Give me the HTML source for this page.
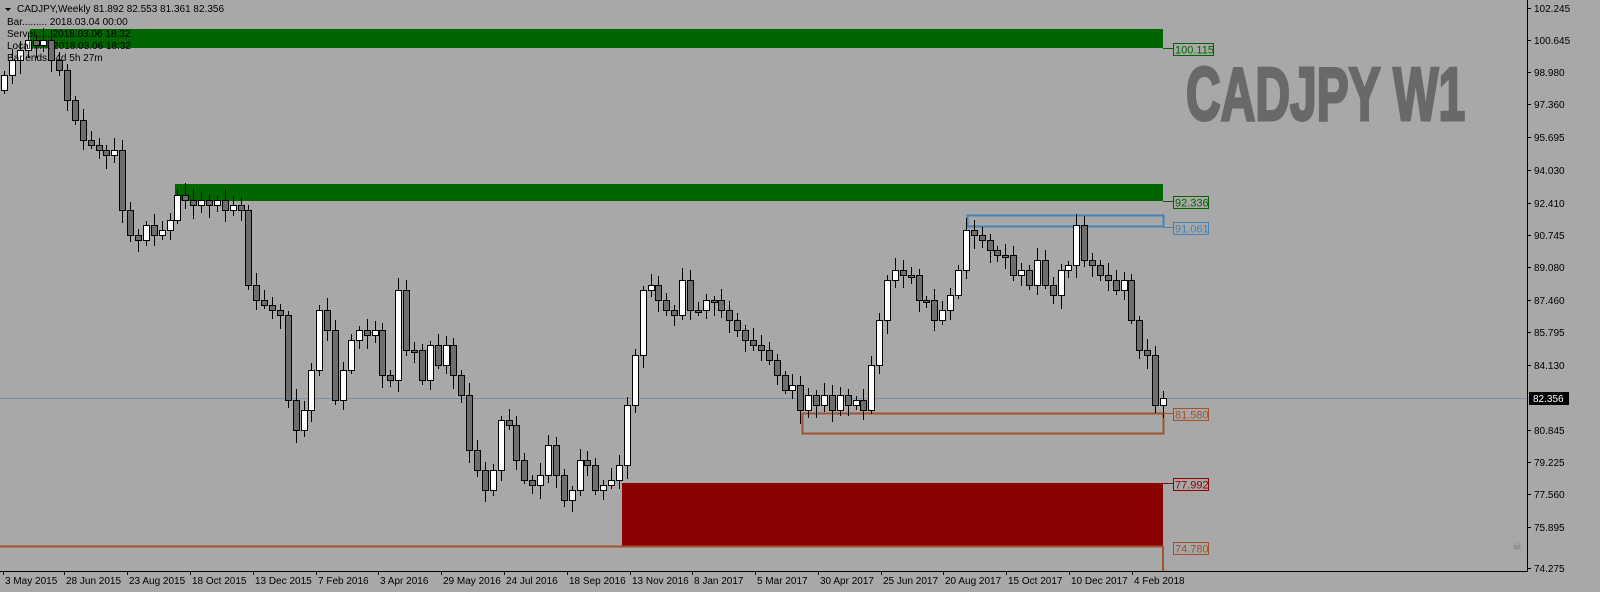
<!DOCTYPE html>
<html><head><meta charset="utf-8"><style>
html,body{margin:0;padding:0;background:#a8a8a8;width:1600px;height:592px;overflow:hidden;font-family:"Liberation Sans",sans-serif}
#c{position:absolute;left:0;top:0}
</style></head><body>
<svg id="c" width="1600" height="592" xmlns="http://www.w3.org/2000/svg">
<rect x="0" y="0" width="1600" height="592" fill="#a8a8a8"/>
<g id="zones">
<rect x="30" y="29" width="1133" height="19" fill="#006400"/>
<rect x="175" y="184" width="988" height="17" fill="#006400"/>
<rect x="622" y="483" width="541" height="63" fill="#8b0000"/>
<rect x="967.5" y="215.5" width="196" height="11" fill="none" stroke="#4682b4" stroke-width="2"/>
<rect x="802.5" y="413.5" width="361" height="20" fill="none" stroke="#a0522d" stroke-width="2"/>
<line x1="0" y1="546.5" x2="1163" y2="546.5" stroke="#a0522d" stroke-width="2"/>
<line x1="1163" y1="546" x2="1163" y2="571" stroke="#a0522d" stroke-width="2"/>
<line x1="0" y1="398.5" x2="1527" y2="398.5" stroke="#7890a8" stroke-width="1"/>
</g>
<g id="candles"></g>
<g font-family="Liberation Sans,sans-serif" font-size="11">
<line x1="1163" y1="48.5" x2="1173" y2="48.5" stroke="#006400"/><rect x="1173.5" y="43.5" width="40" height="12" fill="none" stroke="#006400"/><text x="1175" y="53.5" fill="#006400">100.115</text>
<line x1="1163" y1="201.5" x2="1173" y2="201.5" stroke="#006400"/><rect x="1173.5" y="196.5" width="35" height="12" fill="none" stroke="#006400"/><text x="1175" y="206.5" fill="#006400">92.336</text>
<line x1="1163" y1="227.5" x2="1173" y2="227.5" stroke="#4682b4"/><rect x="1173.5" y="222.5" width="35" height="12" fill="none" stroke="#4682b4"/><text x="1175" y="232.5" fill="#4682b4">91.061</text>
<line x1="1163" y1="413.5" x2="1173" y2="413.5" stroke="#a0522d"/><rect x="1173.5" y="408.5" width="35" height="12" fill="none" stroke="#a0522d"/><text x="1175" y="418.5" fill="#a0522d">81.580</text>
<line x1="1163" y1="483.5" x2="1173" y2="483.5" stroke="#8b0000"/><rect x="1173.5" y="478.5" width="35" height="12" fill="none" stroke="#8b0000"/><text x="1175" y="488.5" fill="#8b0000">77.992</text>
<rect x="1173.5" y="542.5" width="35" height="12" fill="none" stroke="#a0522d"/><text x="1175" y="552.5" fill="#a0522d">74.780</text>
</g>
<text x="1186" y="120" font-family="Liberation Sans,sans-serif" font-weight="bold" font-size="75" fill="#696969" stroke="#696969" stroke-width="3" transform="translate(1186 0) scale(0.64 1) translate(-1186 0)">CADJPY W1</text>
<g font-size="10" font-family="Liberation Sans,sans-serif" fill="#000">
<path d="M5 8 L11 8 L8 11 Z" fill="#000"/>
<text x="17" y="12">CADJPY,Weekly  81.892 82.553 81.361 82.356</text>
<text x="7" y="25">Bar......... 2018.03.04 00:00</text>
<text x="7" y="37">Server..... 2018.03.06 18:32</text>
<text x="7" y="49">Local....... 2018.03.06 18:32</text>
<text x="7" y="61">Bar ends.. 4d 5h 27m</text>
</g>
<line x1="1527.5" y1="0" x2="1527.5" y2="572" stroke="#000"/>
<line x1="0" y1="571.5" x2="1528" y2="571.5" stroke="#000"/>
<g id="axis" font-size="10" font-family="Liberation Sans,sans-serif"></g>
<rect x="1529" y="392" width="40" height="13" fill="#000"/>
<text x="1533" y="402" font-size="10" fill="#fff" font-family="Liberation Sans,sans-serif">82.356</text>
<text x="1512" y="550" font-size="11" fill="#777">☠</text>
</svg>
<script>
(function(){
var ns="http://www.w3.org/2000/svg";
function el(p,t,a,txt){var e=document.createElementNS(ns,t);for(var k in a)e.setAttribute(k,a[k]);if(txt)e.textContent=txt;p.appendChild(e);return e;}
var ax=document.getElementById('axis');
var pl=[["102.245",8],["100.645",40],["98.980",72],["97.360",104],["95.695",137],["94.030",170],["92.410",203],["90.745",235],["89.080",267],["87.460",300],["85.795",332],["84.130",365],["80.845",430],["79.225",462],["77.560",494],["75.895",527],["74.275",568]];
pl.forEach(function(p){el(ax,'line',{x1:1527,x2:1531,y1:p[1]+0.5,y2:p[1]+0.5,stroke:'#000'});el(ax,'text',{x:1534,y:p[1]+4,fill:'#000'},p[0]);});
var dl=[["3 May 2015",3],["28 Jun 2015",64],["23 Aug 2015",127],["18 Oct 2015",190],["13 Dec 2015",253],["7 Feb 2016",316],["3 Apr 2016",378],["29 May 2016",441],["24 Jul 2016",504],["18 Sep 2016",567],["13 Nov 2016",630],["8 Jan 2017",692],["5 Mar 2017",755],["30 Apr 2017",818],["25 Jun 2017",881],["20 Aug 2017",943],["15 Oct 2017",1006],["10 Dec 2017",1069],["4 Feb 2018",1132]];
dl.forEach(function(d){el(ax,'line',{x1:d[1]+0.5,x2:d[1]+0.5,y1:571,y2:575,stroke:'#000'});el(ax,'text',{x:d[1]+2,y:584,fill:'#000'},d[0]);});
var c=[75,60,50,40,45,40,60,70,100,120,140,145,150,155,150,210,235,240,225,235,230,220,195,200,205,200,205,200,210,205,210,285,300,305,310,315,400,430,410,370,310,330,400,370,340,330,335,330,375,380,290,350,350,380,345,365,345,375,395,450,470,490,470,420,425,460,480,485,475,445,475,500,490,460,465,490,485,480,465,405,355,290,285,300,310,315,280,310,310,300,300,310,320,330,340,345,350,360,375,390,385,410,395,405,395,410,395,405,400,410,365,320,280,270,275,275,300,300,320,310,295,270,230,235,240,250,255,255,275,270,285,260,285,295,270,265,225,260,265,275,280,290,280,320,350,355,405,398];
var g=document.getElementById('candles');var n=c.length;var step=(1163-4)/(n-1);var prev=90;
for(var i=0;i<n;i++){var x=Math.round(4+i*step);var o=prev,cl=c[i];var tp=Math.min(o,cl),bt=Math.max(o,cl);if(bt-tp<2)bt=tp+2;
var wt=tp-4-((i*7)%9),wb=bt+4+((i*5)%11);
el(g,'line',{x1:x+0.5,x2:x+0.5,y1:wt,y2:wb,stroke:'#000'});
el(g,'rect',{x:x-2.5,y:tp+0.5,width:6,height:bt-tp,fill:cl<o?'#ffffff':'#6e6e6e',stroke:'#000'});
prev=cl;}
})();
</script>
</body></html>
